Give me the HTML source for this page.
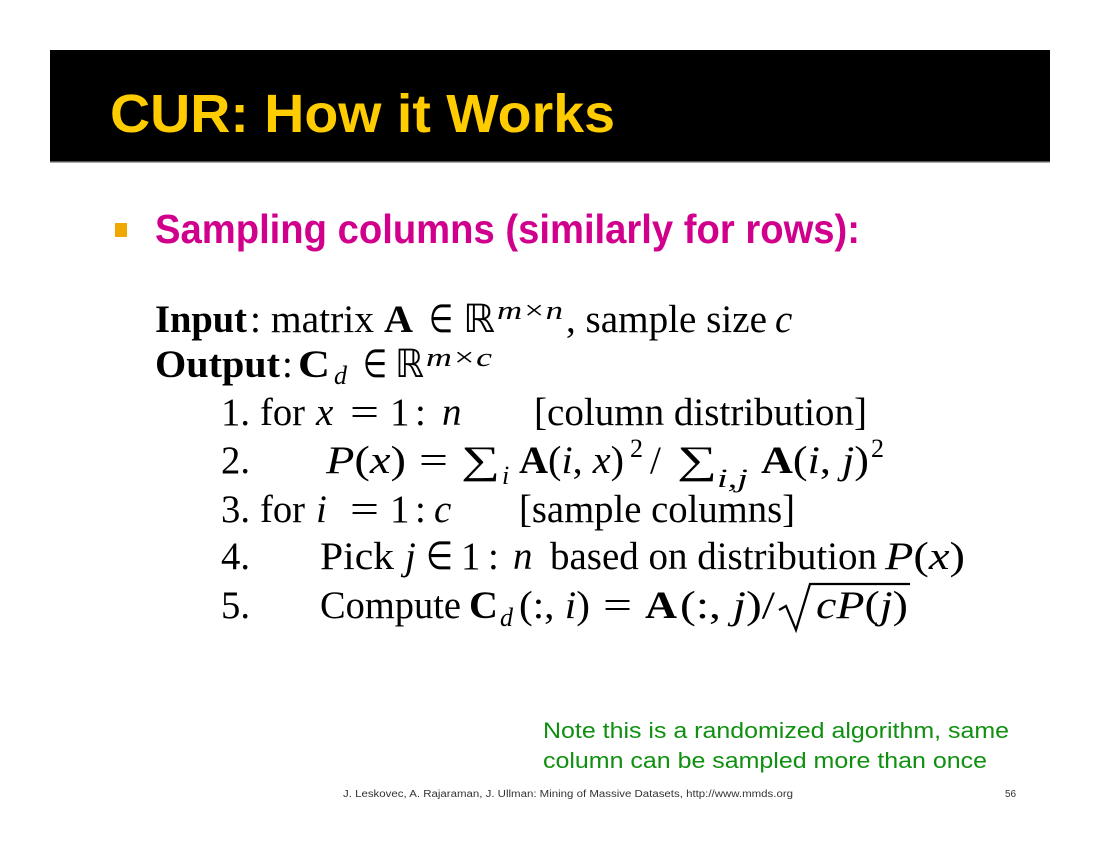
<!DOCTYPE html>
<html><head><meta charset="utf-8"><style>
html,body{margin:0;padding:0;background:#fff;width:1100px;height:850px;overflow:hidden}
svg{display:block}
</style></head><body>
<svg width="1100" height="850" viewBox="0 0 1100 850" xmlns="http://www.w3.org/2000/svg">
<rect x="0" y="0" width="1100" height="850" fill="#fff"/>
<rect x="50" y="50" width="1000" height="112" fill="#000"/>
<rect x="50" y="161" width="1000" height="1.5" fill="#555"/>
<text x="110" y="132" font-family="Liberation Sans, sans-serif" font-weight="bold" font-size="54" fill="#ffcc00" textLength="505" lengthAdjust="spacingAndGlyphs">CUR: How it Works</text>
<rect x="115" y="223" width="12" height="14" fill="#f0a800"/>
<text x="155" y="243" font-family="Liberation Sans, sans-serif" font-weight="bold" font-size="41" fill="#d0008c" textLength="705" lengthAdjust="spacingAndGlyphs">Sampling columns (similarly for rows):</text>
<g font-family="Liberation Serif, serif" font-size="39" fill="#000">
<text x="155" y="332" font-weight="bold" textLength="92" lengthAdjust="spacingAndGlyphs">Input</text>
<text x="250" y="332" textLength="124" lengthAdjust="spacingAndGlyphs">: matrix</text>
<text x="384" y="332" font-weight="bold" textLength="29" lengthAdjust="spacingAndGlyphs">A</text>
<text x="429" y="332" textLength="24" lengthAdjust="spacingAndGlyphs">∈</text>
<text x="463" y="332" textLength="32" lengthAdjust="spacingAndGlyphs">ℝ</text>
<text x="497" y="319" font-size="26" font-style="italic" textLength="66" lengthAdjust="spacingAndGlyphs">m×n</text>
<text x="566" y="332" textLength="201" lengthAdjust="spacingAndGlyphs">, sample size</text>
<text x="775" y="332" font-style="italic">c</text>
<text x="155" y="377" font-weight="bold" textLength="125" lengthAdjust="spacingAndGlyphs">Output</text>
<text x="282" y="377">:</text>
<text x="298" y="377" font-weight="bold" textLength="32" lengthAdjust="spacingAndGlyphs">C</text>
<text x="334" y="384" font-size="26" font-style="italic">d</text>
<text x="363" y="377" textLength="24" lengthAdjust="spacingAndGlyphs">∈</text>
<text x="395" y="377" textLength="29" lengthAdjust="spacingAndGlyphs">ℝ</text>
<text x="426" y="366" font-size="26" font-style="italic" textLength="66" lengthAdjust="spacingAndGlyphs">m×c</text>
<text x="221" y="425" textLength="29" lengthAdjust="spacingAndGlyphs">1.</text>
<text x="260" y="425" textLength="45" lengthAdjust="spacingAndGlyphs">for</text>
<text x="316" y="425" font-style="italic">x</text>
<text x="350" y="425" textLength="29" lengthAdjust="spacingAndGlyphs">=</text>
<text x="390" y="425">1</text>
<text x="415" y="425">:</text>
<text x="442" y="425" font-style="italic">n</text>
<text x="534" y="425" textLength="333" lengthAdjust="spacingAndGlyphs">[column distribution]</text>
<text x="221" y="473" textLength="29" lengthAdjust="spacingAndGlyphs">2.</text>
<text x="326" y="473" textLength="80" lengthAdjust="spacingAndGlyphs"><tspan font-style="italic">P</tspan>(<tspan font-style="italic">x</tspan>)</text>
<text x="419" y="473" textLength="29" lengthAdjust="spacingAndGlyphs">=</text>
<text x="461" y="473" textLength="39" lengthAdjust="spacingAndGlyphs">∑</text>
<text x="502" y="484" font-size="26" font-style="italic">i</text>
<text x="519" y="473" textLength="105" lengthAdjust="spacingAndGlyphs"><tspan font-weight="bold">A</tspan>(<tspan font-style="italic">i</tspan>, <tspan font-style="italic">x</tspan>)</text>
<text x="630" y="457" font-size="26">2</text>
<text x="650" y="473">/</text>
<text x="677" y="473" textLength="40" lengthAdjust="spacingAndGlyphs">∑</text>
<text x="717" y="487" font-size="26" font-style="italic" textLength="31" lengthAdjust="spacingAndGlyphs">i,j</text>
<text x="761" y="473" textLength="108" lengthAdjust="spacingAndGlyphs"><tspan font-weight="bold">A</tspan>(<tspan font-style="italic">i</tspan>, <tspan font-style="italic">j</tspan>)</text>
<text x="871" y="457" font-size="26">2</text>
<text x="221" y="522" textLength="29" lengthAdjust="spacingAndGlyphs">3.</text>
<text x="260" y="522" textLength="45" lengthAdjust="spacingAndGlyphs">for</text>
<text x="316" y="522" font-style="italic">i</text>
<text x="350" y="522" textLength="29" lengthAdjust="spacingAndGlyphs">=</text>
<text x="390" y="522">1</text>
<text x="415" y="522">:</text>
<text x="434" y="522" font-style="italic">c</text>
<text x="519" y="522" textLength="276" lengthAdjust="spacingAndGlyphs">[sample columns]</text>
<text x="221" y="569" textLength="29" lengthAdjust="spacingAndGlyphs">4.</text>
<text x="320" y="569" textLength="74" lengthAdjust="spacingAndGlyphs">Pick</text>
<text x="405" y="569" font-style="italic">j</text>
<text x="426" y="569" textLength="27" lengthAdjust="spacingAndGlyphs">∈</text>
<text x="461" y="569">1</text>
<text x="488" y="569">:</text>
<text x="513" y="569" font-style="italic">n</text>
<text x="550" y="569" textLength="327" lengthAdjust="spacingAndGlyphs">based on distribution</text>
<text x="885" y="569" textLength="80" lengthAdjust="spacingAndGlyphs"><tspan font-style="italic">P</tspan>(<tspan font-style="italic">x</tspan>)</text>
<text x="221" y="618" textLength="29" lengthAdjust="spacingAndGlyphs">5.</text>
<text x="320" y="618" textLength="141" lengthAdjust="spacingAndGlyphs">Compute</text>
<text x="469" y="618" font-weight="bold" textLength="29" lengthAdjust="spacingAndGlyphs">C</text>
<text x="500" y="626" font-size="26" font-style="italic">d</text>
<text x="519" y="618" textLength="71" lengthAdjust="spacingAndGlyphs">(:, <tspan font-style="italic">i</tspan>)</text>
<text x="603" y="618" textLength="29" lengthAdjust="spacingAndGlyphs">=</text>
<text x="645" y="618" font-weight="bold" textLength="32" lengthAdjust="spacingAndGlyphs">A</text>
<text x="680" y="618" textLength="95" lengthAdjust="spacingAndGlyphs">(:, <tspan font-style="italic">j</tspan>)/</text>
<path d="M779 610 L786 606 L796 630 L810 584 L910 584" fill="none" stroke="#000" stroke-width="2.2"/>
<text x="816" y="618" textLength="92" lengthAdjust="spacingAndGlyphs"><tspan font-style="italic">cP</tspan>(<tspan font-style="italic">j</tspan>)</text>
</g>
<g font-family="Liberation Sans, sans-serif" font-size="22" fill="#109010">
<text x="543" y="738" textLength="466" lengthAdjust="spacingAndGlyphs">Note this is a randomized algorithm, same</text>
<text x="543" y="768" textLength="444" lengthAdjust="spacingAndGlyphs">column can be sampled more than once</text>
</g>
<text x="343" y="797" font-family="Liberation Sans, sans-serif" font-size="10" fill="#333" textLength="450" lengthAdjust="spacingAndGlyphs">J. Leskovec, A. Rajaraman, J. Ullman: Mining of Massive Datasets, http://www.mmds.org</text>
<text x="1005" y="797" font-family="Liberation Sans, sans-serif" font-size="10" fill="#333">56</text>
</svg>
</body></html>
